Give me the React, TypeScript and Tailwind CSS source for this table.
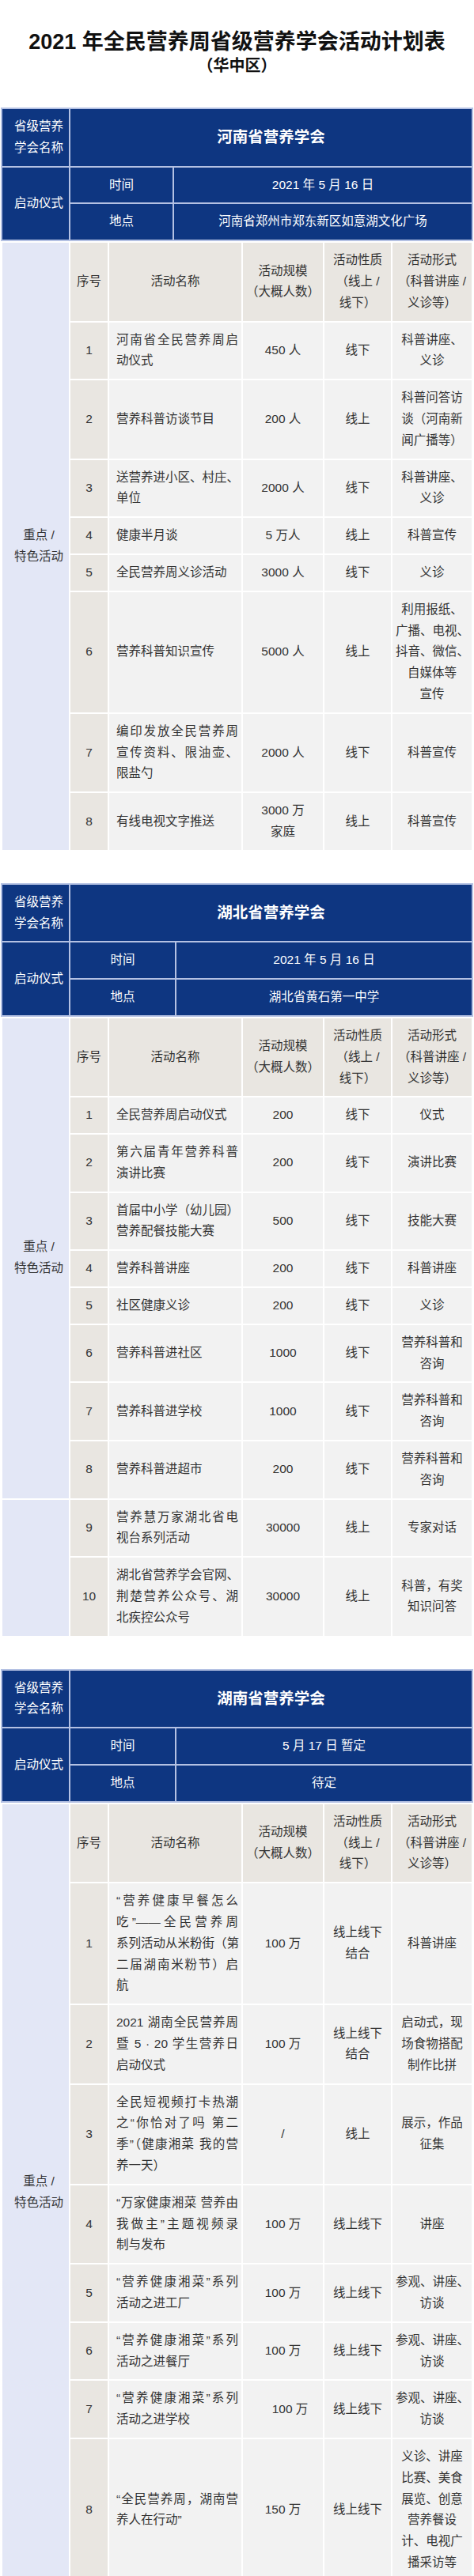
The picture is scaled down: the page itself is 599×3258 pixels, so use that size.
import React from "react";

type Row = {
  name: string[];
  scale: string[];
  nature: string[];
  form: string[];
  scaleClass?: string;
};

type Plan = {
  society: string;
  time: string;
  place: string;
  timeCol: string;
  groups: number[];
  rows: Row[];
};

const plans: Plan[] = [
  {
    society: "河南省营养学会",
    time: "2021 年 5 月 16 日",
    place: "河南省郑州市郑东新区如意湖文化广场",
    timeCol: "w-[131px]",
    groups: [9],
    rows: [
      { name: ["河南省全民营养周启", "动仪式"], scale: ["450 人"], nature: ["线下"], form: ["科普讲座、", "义诊"] },
      { name: ["营养科普访谈节目"], scale: ["200 人"], nature: ["线上"], form: ["科普问答访", "谈（河南新", "闻广播等）"] },
      { name: ["送营养进小区、村庄、", "单位"], scale: ["2000 人"], nature: ["线下"], form: ["科普讲座、", "义诊"] },
      { name: ["健康半月谈"], scale: ["5 万人"], nature: ["线上"], form: ["科普宣传"] },
      { name: ["全民营养周义诊活动"], scale: ["3000 人"], nature: ["线下"], form: ["义诊"] },
      {
        name: ["营养科普知识宣传"],
        scale: ["5000 人"],
        nature: ["线上"],
        form: ["利用报纸、", "广播、电视、", "抖音、微信、", "自媒体等", "宣传"],
      },
      { name: ["编印发放全民营养周", "宣传资料、限油壶、", "限盐勺"], scale: ["2000 人"], nature: ["线下"], form: ["科普宣传"] },
      { name: ["有线电视文字推送"], scale: ["3000 万", "家庭"], nature: ["线上"], form: ["科普宣传"] },
    ],
  },
  {
    society: "湖北省营养学会",
    time: "2021 年 5 月 16 日",
    place: "湖北省黄石第一中学",
    timeCol: "w-[134px]",
    groups: [9, 2],
    rows: [
      { name: ["全民营养周启动仪式"], scale: ["200"], nature: ["线下"], form: ["仪式"] },
      { name: ["第六届青年营养科普", "演讲比赛"], scale: ["200"], nature: ["线下"], form: ["演讲比赛"] },
      { name: ["首届中小学（幼儿园）", "营养配餐技能大赛"], scale: ["500"], nature: ["线下"], form: ["技能大赛"] },
      { name: ["营养科普讲座"], scale: ["200"], nature: ["线下"], form: ["科普讲座"] },
      { name: ["社区健康义诊"], scale: ["200"], nature: ["线下"], form: ["义诊"] },
      { name: ["营养科普进社区"], scale: ["1000"], nature: ["线下"], form: ["营养科普和", "咨询"] },
      { name: ["营养科普进学校"], scale: ["1000"], nature: ["线下"], form: ["营养科普和", "咨询"] },
      { name: ["营养科普进超市"], scale: ["200"], nature: ["线下"], form: ["营养科普和", "咨询"] },
      { name: ["营养慧万家湖北省电", "视台系列活动"], scale: ["30000"], nature: ["线上"], form: ["专家对话"] },
      {
        name: ["湖北省营养学会官网、", "荆楚营养公众号、湖", "北疾控公众号"],
        scale: ["30000"],
        nature: ["线上"],
        form: ["科普，有奖", "知识问答"],
      },
    ],
  },
  {
    society: "湖南省营养学会",
    time: "5 月 17 日 暂定",
    place: "待定",
    timeCol: "w-[134px]",
    groups: [9],
    rows: [
      {
        name: ["“营养健康早餐怎么", "吃”——全民营养周", "系列活动从米粉街（第", "二届湖南米粉节）启", "航"],
        scale: ["100 万"],
        nature: ["线上线下", "结合"],
        form: ["科普讲座"],
      },
      {
        name: ["2021 湖南全民营养周", "暨 5 · 20 学生营养日", "启动仪式"],
        scale: ["100 万"],
        nature: ["线上线下", "结合"],
        form: ["启动式，现", "场食物搭配", "制作比拼"],
      },
      {
        name: ["全民短视频打卡热潮", "之“你恰对了吗 第二", "季”（健康湘菜 我的营", "养一天）"],
        scale: ["/"],
        nature: ["线上"],
        form: ["展示，作品", "征集"],
      },
      {
        name: ["“万家健康湘菜 营养由", "我做主”主题视频录", "制与发布"],
        scale: ["100 万"],
        nature: ["线上线下"],
        form: ["讲座"],
      },
      { name: ["“营养健康湘菜”系列", "活动之进工厂"], scale: ["100 万"], nature: ["线上线下"], form: ["参观、讲座、", "访谈"] },
      { name: ["“营养健康湘菜”系列", "活动之进餐厅"], scale: ["100 万"], nature: ["线上线下"], form: ["参观、讲座、", "访谈"] },
      {
        name: ["“营养健康湘菜”系列", "活动之进学校"],
        scale: ["100 万"],
        nature: ["线上线下"],
        form: ["参观、讲座、", "访谈"],
        scaleClass: "pl-[22px]",
      },
      {
        name: ["“全民营养周，湖南营", "养人在行动”"],
        scale: ["150 万"],
        nature: ["线上线下"],
        form: ["义诊、讲座", "比赛、美食", "展览、创意", "营养餐设", "计、电视广", "播采访等"],
      },
    ],
  },
];

const blueCell = "border-2 border-[#b4c1e3] bg-[#0e3681] text-white align-middle py-[9px] text-center";
const greyCell = "border-2 border-white align-middle px-[4px] py-[9px] text-center";

// every line gets a fixed box so mixed Latin/CJK fonts don't grow the rows
const Lines = ({ lines, justify = false }: { lines: string[]; justify?: boolean }) => (
  <>
    {lines.map((l, i) => (
      <div
        key={i}
        className={
          justify && i < lines.length - 1
            ? "h-[26.8px] whitespace-nowrap text-justify [text-align-last:justify]"
            : "h-[26.8px] whitespace-nowrap"
        }
      >
        {l}
      </div>
    ))}
  </>
);

const PlanTable = ({ plan }: { plan: Plan }) => {
  // left column cells start at the header row and at every group boundary
  const starts: Record<number, number> = {};
  let at = -1;
  plan.groups.forEach((g) => {
    starts[at] = g;
    at += g;
  });

  const leftCell = (idx: number) => {
    if (!(idx in starts)) return null;
    return (
      <td
        rowSpan={starts[idx]}
        className="border-2 border-white bg-[#e3e7f6] align-middle pl-[10px] pr-[2px] text-center"
      >
        {idx === -1 && <Lines lines={["重点 /", "特色活动"]} />}
      </td>
    );
  };

  return (
    <div className="px-[1px]">
      <table className="w-full table-fixed border-collapse">
        <colgroup>
          <col className="w-[86px]" />
          <col className={plan.timeCol} />
          <col />
        </colgroup>
        <tbody className="leading-[26.8px]">
          <tr>
            <td className={`${blueCell} pl-[10px] pr-[2px]`}>
              <Lines lines={["省级营养", "学会名称"]} />
            </td>
            <td colSpan={2} className={`${blueCell} text-[19.5px] font-bold`}>
              <Lines lines={[plan.society]} />
            </td>
          </tr>
          <tr>
            <td rowSpan={2} className={`${blueCell} pl-[10px] pr-[2px]`}>
              <Lines lines={["启动仪式"]} />
            </td>
            <td className={blueCell}>
              <Lines lines={["时间"]} />
            </td>
            <td className={blueCell}>
              <Lines lines={[plan.time]} />
            </td>
          </tr>
          <tr>
            <td className={blueCell}>
              <Lines lines={["地点"]} />
            </td>
            <td className={blueCell}>
              <Lines lines={[plan.place]} />
            </td>
          </tr>
        </tbody>
      </table>

      <table className="w-full table-fixed border-collapse">
        <colgroup>
          <col className="w-[86px]" />
          <col className="w-[49px]" />
          <col className="w-[169px]" />
          <col className="w-[103px]" />
          <col className="w-[86px]" />
          <col />
        </colgroup>
        <tbody className="leading-[26.8px] text-[#333]">
          <tr>
            {leftCell(-1)}
            <td className={`${greyCell} bg-[#e9e6e1]`}>
              <Lines lines={["序号"]} />
            </td>
            <td className={`${greyCell} bg-[#e9e6e1]`}>
              <Lines lines={["活动名称"]} />
            </td>
            <td className={`${greyCell} bg-[#e9e6e1]`}>
              <Lines lines={["活动规模", "（大概人数）"]} />
            </td>
            <td className={`${greyCell} bg-[#e9e6e1]`}>
              <Lines lines={["活动性质", "（线上 /", "线下）"]} />
            </td>
            <td className={`${greyCell} bg-[#e9e6e1]`}>
              <Lines lines={["活动形式", "（科普讲座 /", "义诊等）"]} />
            </td>
          </tr>
          {plan.rows.map((r, i) => (
            <tr key={i}>
              {leftCell(i)}
              <td className={`${greyCell} bg-[#e9e6e1]`}>
                <Lines lines={[String(i + 1)]} />
              </td>
              <td className="border-2 border-white bg-[#f2f2f2] py-[9px] pl-[9px] pr-[4px] align-middle text-left">
                <Lines lines={r.name} justify />
              </td>
              <td className={`${greyCell} bg-[#f2f2f2] ${r.scaleClass ?? ""}`}>
                <Lines lines={r.scale} />
              </td>
              <td className={`${greyCell} bg-[#f2f2f2]`}>
                <Lines lines={r.nature} />
              </td>
              <td className={`${greyCell} bg-[#f2f2f2]`}>
                <Lines lines={r.form} />
              </td>
            </tr>
          ))}
        </tbody>
      </table>
    </div>
  );
};

export default function App() {
  return (
    <div className="w-[599px] bg-white text-[15.5px] [font-family:'Liberation_Sans','Noto_Sans_CJK_SC',sans-serif]">
      <div className="pt-[37px] pb-[40px] text-center text-[#111]">
        <h1 className="h-[32px] text-[27px] font-bold leading-[32px]">2021 年全民营养周省级营养学会活动计划表</h1>
        <div className="mt-[1px] h-[26px] text-[20px] font-bold leading-[26px]">（华中区）</div>
      </div>
      <div className="flex flex-col gap-[40px] pb-[1px]">
        {plans.map((p) => (
          <PlanTable key={p.society} plan={p} />
        ))}
      </div>
    </div>
  );
}
